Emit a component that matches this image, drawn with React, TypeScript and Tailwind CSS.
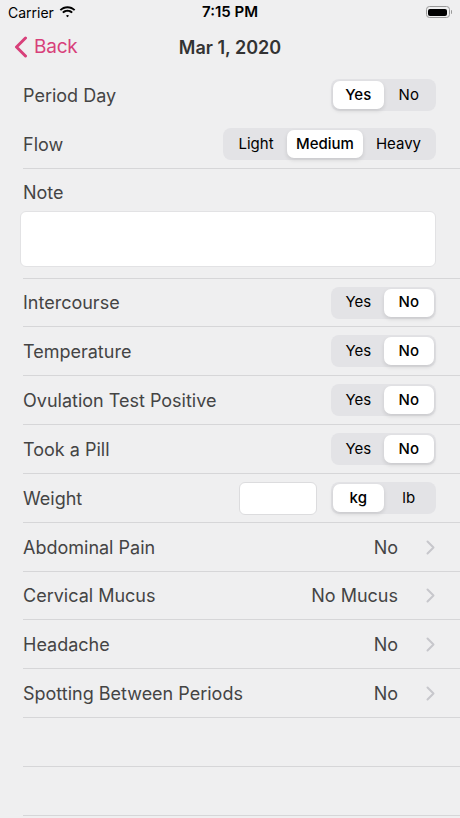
import { ChevronLeft } from 'lucide-react';

const font = { fontFamily: 'Inter, "Noto Sans", sans-serif' };

type Seg = { label: string; w?: string };

function Segmented({ options, selected, width }: { options: Seg[]; selected: number; width: string }) {
    return (
        <div className={`flex h-[32px] ${width} rounded-[8px] bg-[#e3e3e6] p-[2px]`}>
            {options.map((o, i) => (
                <div
                    key={o.label}
                    className={`flex ${o.w ?? 'flex-1'} items-center justify-center rounded-[7px] text-[15px] text-black ${
                        i === selected ? 'bg-white font-medium shadow-[0_2px_4px_rgba(0,0,0,0.12)]' : ''
                    }`}
                >
                    {o.label}
                </div>
            ))}
        </div>
    );
}

const yesNo = [{ label: 'Yes' }, { label: 'No' }];

function Row({ label, children, h = 'h-[49px]' }: { label: string; children?: React.ReactNode; h?: string }) {
    return (
        <div className={`flex ${h} items-center justify-between border-b border-[#d6d6d8] pr-[24px]`}>
            <span className="text-[18px] text-[#444]">{label}</span>
            {children}
        </div>
    );
}

function Chevron() {
    return (
        <svg width="9" height="15" viewBox="0 0 9 15" className="mr-[1px]">
            <path d="M1.5 1.5 7.5 7.5 1.5 13.5" fill="none" stroke="#c7c7cc" strokeWidth="2" strokeLinecap="round" strokeLinejoin="round" />
        </svg>
    );
}

function Disclosure({ label, value, h }: { label: string; value: string; h?: string }) {
    return (
        <Row label={label} h={h}>
            <div className="flex items-center gap-[28px]">
                <span className="text-[18px] text-[#444]">{value}</span>
                <Chevron />
            </div>
        </Row>
    );
}

function StatusBar() {
    return (
        <div className="relative flex h-[24px] items-center justify-between px-[8px]">
            <div className="flex items-center gap-[5px]">
                <span className="text-[14px] text-black">Carrier</span>
                <svg width="17" height="12" viewBox="0 0 17 12">
                    <path d="M8.5 2.2c2.5 0 4.8 1 6.5 2.6l1.3-1.3C14.2 1.4 11.5.2 8.5.2S2.8 1.4.7 3.5L2 4.8c1.7-1.6 4-2.6 6.5-2.6z" fill="#000" />
                    <path d="M8.5 5.7c1.5 0 2.9.6 4 1.6l1.3-1.3c-1.4-1.3-3.3-2.2-5.3-2.2S4.6 4.7 3.2 6l1.3 1.3c1.1-1 2.5-1.6 4-1.6z" fill="#000" />
                    <path d="M8.5 9.1c.6 0 1.1.2 1.5.6L8.5 11.3 7 9.7c.4-.4.9-.6 1.5-.6z" fill="#000" />
                </svg>
            </div>
            <span className="absolute left-1/2 -translate-x-1/2 text-[15px] font-semibold text-black">7:15 PM</span>
            <div className="flex items-center gap-[1px]">
                <div className="flex h-[12px] w-[24px] items-center rounded-[3.5px] border border-[#999] p-[1.5px]">
                    <div className="h-full w-full rounded-[2px] bg-black" />
                </div>
                <div className="h-[4px] w-[1.5px] rounded-r bg-[#999]" />
            </div>
        </div>
    );
}

export default function App() {
    return (
        <div style={font} className="min-h-[818px] w-[460px] overflow-hidden bg-[#efeff0]">
            <StatusBar />
            <div className="relative flex h-[46px] items-center">
                <div className="flex items-center gap-[6px] pl-[14px] text-[#d8407a]">
                    <svg width="14" height="22" viewBox="0 0 14 22">
                        <path d="M11.5 2 2.5 11l9 9" fill="none" stroke="currentColor" strokeWidth="3" strokeLinecap="round" strokeLinejoin="round" />
                    </svg>
                    <span className="text-[19px] tracking-[-0.2px]">Back</span>
                </div>
                <span className="absolute left-1/2 -translate-x-1/2 text-[18px] font-semibold text-[#333]">Mar 1, 2020</span>
            </div>
            <div className="pl-[23px]">
                <div className="flex h-[50px] items-center justify-between pr-[24px]">
                    <span className="text-[18px] text-[#444]">Period Day</span>
                    <Segmented options={yesNo} selected={0} width="w-[105px]" />
                </div>
                <Row label="Flow">
                    <Segmented
                        options={[{ label: 'Light', w: 'w-[62px]' }, { label: 'Medium', w: 'w-[76px]' }, { label: 'Heavy' }]}
                        selected={1}
                        width="w-[213px]"
                    />
                </Row>
                <div className="border-b border-[#d6d6d8] pb-[11px] pr-[24px]">
                    <div className="pt-[12px] text-[18px] leading-[24px] text-[#444]">Note</div>
                    <div className="-ml-[3px] mt-[6px] h-[56px] rounded-[6px] border border-[#e2e2e4] bg-white" />
                </div>
                <Row label="Intercourse" h="h-[48px]">
                    <Segmented options={yesNo} selected={1} width="w-[105px]" />
                </Row>
                <Row label="Temperature">
                    <Segmented options={yesNo} selected={1} width="w-[105px]" />
                </Row>
                <Row label="Ovulation Test Positive">
                    <Segmented options={yesNo} selected={1} width="w-[105px]" />
                </Row>
                <Row label="Took a Pill">
                    <Segmented options={yesNo} selected={1} width="w-[105px]" />
                </Row>
                <Row label="Weight">
                    <div className="flex items-center gap-[14px]">
                        <div className="h-[33px] w-[78px] rounded-[6px] border border-[#dcdcde] bg-white" />
                        <Segmented options={[{ label: 'kg' }, { label: 'lb' }]} selected={0} width="w-[105px]" />
                    </div>
                </Row>
                <Disclosure label="Abdominal Pain" value="No" />
                <Disclosure label="Cervical Mucus" value="No Mucus" h="h-[48px]" />
                <Disclosure label="Headache" value="No" />
                <Disclosure label="Spotting Between Periods" value="No" />
                <div className="h-[49px] border-b border-[#d6d6d8]" />
                <div className="h-[49px] border-b border-[#d6d6d8]" />
            </div>
        </div>
    );
}
